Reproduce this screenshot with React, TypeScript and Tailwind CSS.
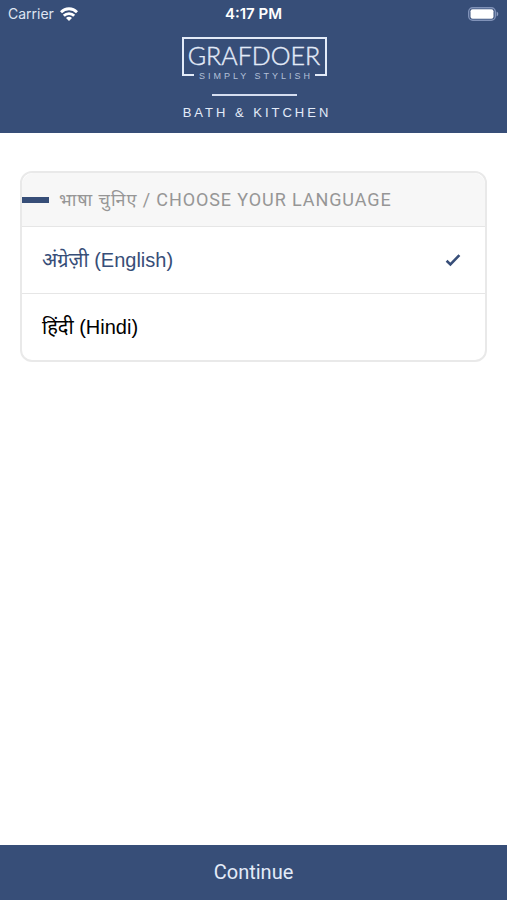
import { useState } from 'react';
import clsx from 'clsx';

const languages = [
  { value: 'en', label: 'अंग्रेज़ी (English)' },
  { value: 'hi', label: 'हिंदी (Hindi)' },
];

function WifiIcon() {
  return (
    <svg width="18" height="14" viewBox="0 0 18 14" fill="none" stroke="white" strokeWidth="2.8" aria-hidden="true">
      <path d="M1 5.2C5.4 0.6 12.6 0.6 17 5.2" />
      <path d="M3.8 8.8C6.6 5.8 11.4 5.8 14.2 8.8" />
      <path d="M9 14L6 11C7.6 9.4 10.4 9.4 12 11Z" fill="white" stroke="none" />
    </svg>
  );
}

function BatteryIcon() {
  return (
    <svg width="31" height="14" viewBox="0 0 31 14" fill="none" aria-hidden="true">
      <rect x="0.7" y="0.7" width="26.6" height="12.6" rx="4" stroke="#8092b8" strokeWidth="1.4" />
      <rect x="2.5" y="2.2" width="23" height="9.6" rx="2" fill="white" />
      <path d="M28.6 4.5C30.8 5.4 30.8 8.6 28.6 9.5Z" fill="#8c9cbf" />
    </svg>
  );
}

function StatusBar() {
  return (
    <div className="grid h-7 grid-cols-3 items-center pl-2 pr-2 text-white">
      <div className="flex items-center gap-1.5 font-['Inter',sans-serif] text-sm text-[#dfe5f2]">
        Carrier
        <WifiIcon />
      </div>
      <div className="text-center font-['Inter',sans-serif] text-[15px] font-semibold">4:17 PM</div>
      <div className="flex justify-end">
        <BatteryIcon />
      </div>
    </div>
  );
}

function Logo() {
  return (
    <svg
      className="mx-auto mt-2"
      width="170"
      height="84"
      viewBox="-10 0 170 84"
      fill="#e3ebf8"
      textAnchor="middle"
      role="img"
      aria-label="Grafdoer Bath & Kitchen"
    >
      <path d="M15 39H4V2H147V39H136" fill="none" stroke="#e3ebf8" strokeWidth="2" />
      <text
        x="75"
        y="29"
        stroke="#e3ebf8"
        strokeWidth="0.4"
        className="font-['Lato',sans-serif] text-[25px] font-light"
      >
        GRAFDOER
      </text>
      <text x="77" y="43" fill="#b3c0d9" className="font-['Liberation_Sans',sans-serif] text-[9px] tracking-[3px]">
        SIMPLY STYLISH
      </text>
      <path d="M33 59H118" stroke="#d5def0" strokeWidth="2" />
      <text x="78" y="81" className="font-['Liberation_Sans',sans-serif] text-[13px] tracking-[3px]">
        BATH &amp; KITCHEN
      </text>
    </svg>
  );
}

function CheckIcon() {
  return (
    <svg width="16" height="14" viewBox="0 0 16 14" fill="none" stroke="#374e78" strokeWidth="2.6" aria-hidden="true">
      <path d="M1.6 7.8L5.4 11.4L14.4 2.2" />
    </svg>
  );
}

export default function App() {
  const [language, setLanguage] = useState('en');

  return (
    <div className="flex min-h-screen flex-col bg-white font-['Roboto','Noto_Sans',sans-serif]">
      <header className="bg-[#374e78] pb-[13px]">
        <StatusBar />
        <Logo />
      </header>
      <main className="flex-1 px-5 pt-[38px]">
        <fieldset className="overflow-hidden rounded-xl border-2 border-[#e9e9e9]" aria-labelledby="language-title">
          <div className="flex h-[54px] items-center gap-2.5 border-b border-[#e6e6e6] bg-[#f7f7f7]">
            <span className="h-1.5 w-[27px] bg-[#374e78]" />
            <h1 id="language-title" className="text-lg tracking-wider text-[#969696]">
              भाषा चुनिए / CHOOSE YOUR LANGUAGE
            </h1>
          </div>
          {languages.map((item) => (
            <label
              key={item.value}
              className={clsx(
                "flex h-[67px] cursor-pointer items-center justify-between border-b border-[#e6e6e6] pl-5 pr-6 font-['Liberation_Sans','Noto_Sans',sans-serif] text-xl last:h-[66px] last:border-b-0",
                language === item.value ? 'text-[#374e78]' : 'text-black',
              )}
            >
              <input
                type="radio"
                name="language"
                className="sr-only"
                value={item.value}
                checked={language === item.value}
                onChange={() => setLanguage(item.value)}
              />
              <span>{item.label}</span>
              {language === item.value && <CheckIcon />}
            </label>
          ))}
        </fieldset>
      </main>
      <button type="button" className="h-[55px] w-full cursor-pointer bg-[#374e78] pb-0.5 text-xl text-[#e3ebf8]">
        Continue
      </button>
    </div>
  );
}
